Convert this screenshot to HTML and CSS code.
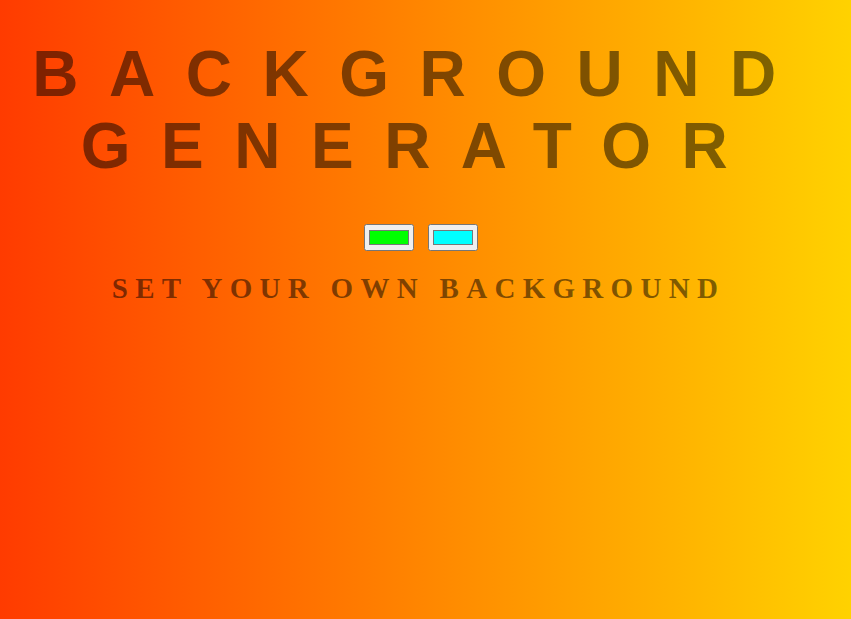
FILE: index.html
```
<!DOCTYPE html>
<html lang="en">
<head>
<meta charset="utf-8">
<title>Background Generator</title>
<link rel="stylesheet" href="styles.css">
</head>
<body class="page">
  <h1 class="title">BACKGROUND GENERATOR</h1>
  <div class="pickers">
    <input class="picker" type="color" value="#00ff00" name="color1">
    <input class="picker" type="color" value="#00ffff" name="color2">
  </div>
  <h3 class="subtitle">SET YOUR OWN BACKGROUND</h3>
</body>
</html>
```
FILE: styles.css
```
html {
  background: linear-gradient(to right, #ff3b00, #ffd200);
  min-height: 100%;
}

.page {
  margin: 0;
  min-height: 100vh;
  background: linear-gradient(to right, #ff3b00, #ffd200);
  text-align: center;
}

.title {
  margin: 38px 8px 0;
  padding-right: 12px;
  font-family: "Liberation Sans", Arial, sans-serif;
  font-weight: bold;
  font-size: 64px;
  line-height: 72px;
  letter-spacing: 30.5px;
  color: rgba(0, 0, 0, 0.5);
}

.pickers {
  display: flex;
  justify-content: center;
  gap: 14px;
  margin-top: 42px;
  padding-right: 9px;
}

.picker {
  margin: 0;
  width: 50px;
  height: 27px;
}

.subtitle {
  margin: 21px 8px 0;
  padding-right: 14px;
  font-family: "Liberation Serif", "Times New Roman", serif;
  font-weight: bold;
  font-size: 29px;
  line-height: 33px;
  letter-spacing: 7.3px;
  color: rgba(0, 0, 0, 0.5);
}
```
